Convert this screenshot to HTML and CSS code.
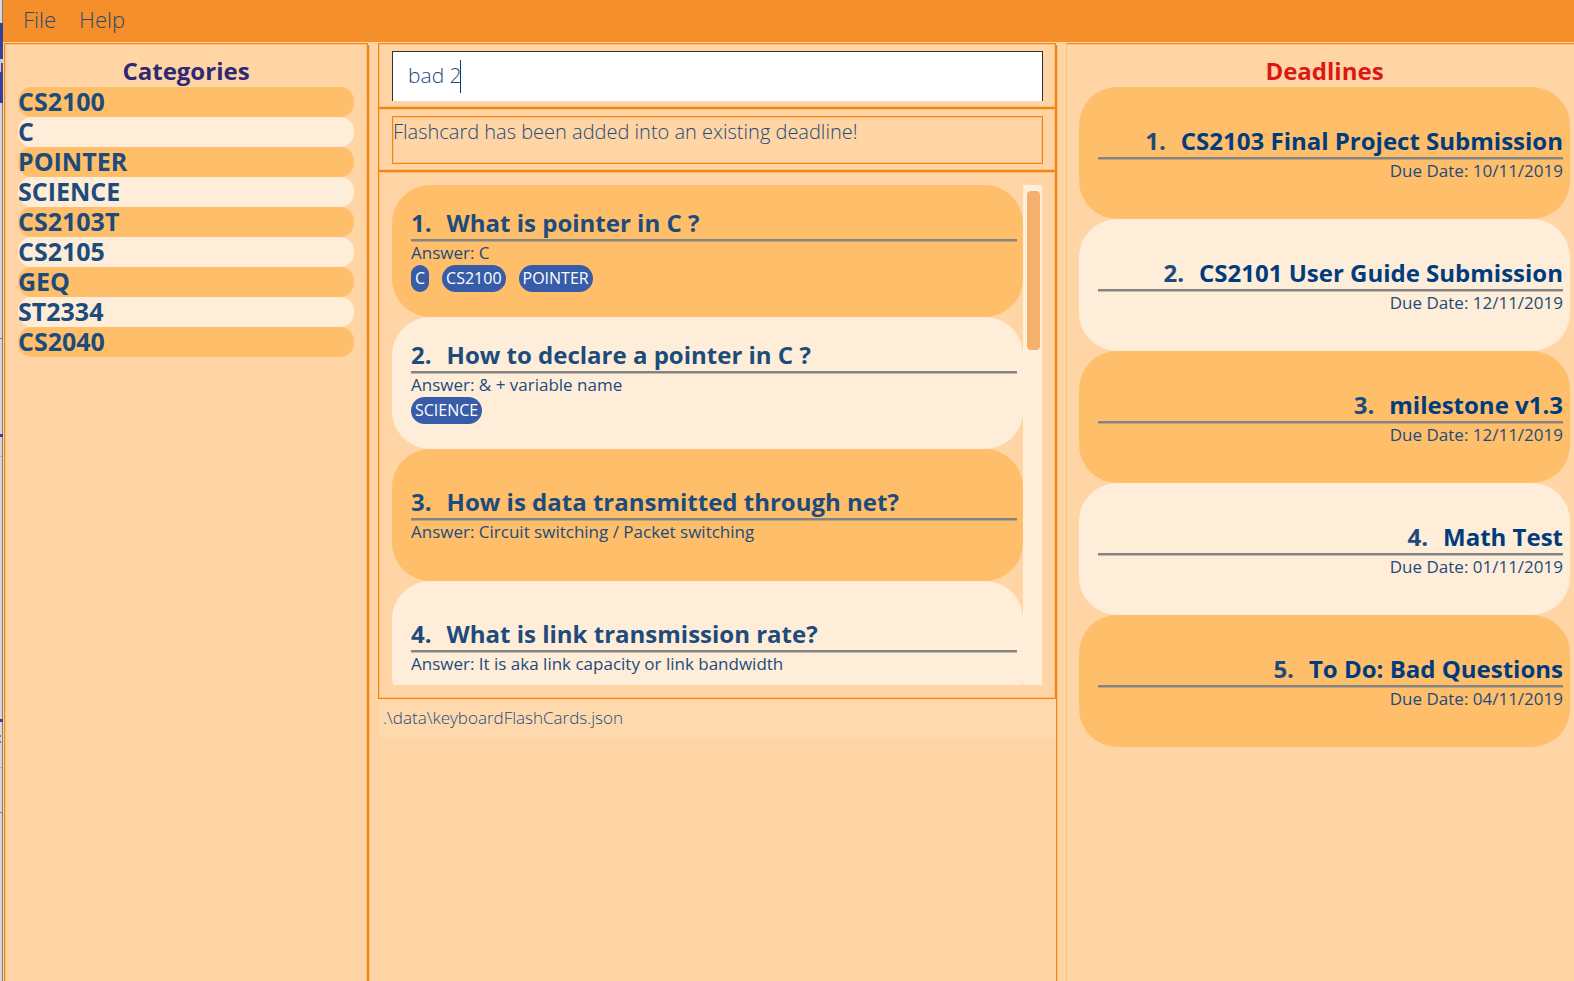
FILE: index.html
```html
<!DOCTYPE html>
<html lang="en">
<head>
<meta charset="utf-8">
<title>Keyboard Flash Cards</title>
<link rel="stylesheet" href="styles.css">
</head>
<body>
<div class="edge" aria-hidden="true">
  <svg class="edge-art" width="3" height="981" shape-rendering="crispEdges">
    <rect width="3" height="981" fill="#d8d8d8"/>
    <path d="M0 23h3v36H0zM0 72h3v31H0z" fill="#34409a"/>
    <path d="M0 59h3v13H0z" fill="#c9c8d6"/>
    <path d="M1 63h2v9H1z" fill="#5a4a86"/>
    <path d="M0 338h2v1H0zM0 735h1v2H0zM0 741h1v2H0zM0 812h2v1H0z" fill="#777"/>
    <path d="M0 456h2v1H0zM0 767h2v1H0z" fill="#b5b5b5"/>
    <path d="M2 103h1v878H2zM2 0h1v23H2z" fill="#7b7b80"/>
    <path d="M0 434h3v3H0zM0 719h3v3H0z" fill="#34409a"/>
  </svg>
</div>
<div class="window">
  <nav class="menubar">
    <button class="menu" type="button">File</button>
    <button class="menu" type="button">Help</button>
  </nav>
  <main class="columns">
    <section class="panel categories">
      <h2 class="heading">Categories</h2>
      <ul class="list category-list">
        <li class="category">CS2100</li>
        <li class="category">C</li>
        <li class="category">POINTER</li>
        <li class="category">SCIENCE</li>
        <li class="category">CS2103T</li>
        <li class="category">CS2105</li>
        <li class="category">GEQ</li>
        <li class="category">ST2334</li>
        <li class="category">CS2040</li>
      </ul>
    </section>
    <div class="divider"></div>
    <section class="center">
      <div class="pane command">
        <input class="command-input" type="text" aria-label="Command" value="bad 2">
        <span class="caret"></span>
      </div>
      <div class="pane result">
        <output class="result-box">Flashcard has been added into an existing deadline!</output>
      </div>
      <div class="pane cards">
        <ol class="list card-list">
          <li class="card">
            <h3 class="title"><span>1.</span><span>What is pointer in C ?</span></h3>
            <p class="detail">Answer: C</p>
            <div class="tags"><span class="tag">C</span><span class="tag">CS2100</span><span class="tag">POINTER</span></div>
          </li>
          <li class="card">
            <h3 class="title"><span>2.</span><span>How to declare a pointer in C ?</span></h3>
            <p class="detail">Answer: &amp; + variable name</p>
            <div class="tags"><span class="tag">SCIENCE</span></div>
          </li>
          <li class="card">
            <h3 class="title"><span>3.</span><span>How is data transmitted through net?</span></h3>
            <p class="detail">Answer: Circuit switching / Packet switching</p>
          </li>
          <li class="card">
            <h3 class="title"><span>4.</span><span>What is link transmission rate?</span></h3>
            <p class="detail">Answer: It is aka link capacity or link bandwidth</p>
          </li>
        </ol>
        <div class="track"><div class="thumb"></div></div>
      </div>
      <footer class="status">.\data\keyboardFlashCards.json</footer>
    </section>
    <div class="divider"></div>
    <section class="panel deadlines">
      <h2 class="heading">Deadlines</h2>
      <ol class="list deadline-list">
        <li class="card due">
          <h3 class="title"><span class="number">1.</span><span>CS2103 Final Project Submission</span></h3>
          <p class="detail">Due Date: 10/11/2019</p>
        </li>
        <li class="card due">
          <h3 class="title"><span class="number">2.</span><span>CS2101 User Guide Submission</span></h3>
          <p class="detail">Due Date: 12/11/2019</p>
        </li>
        <li class="card due">
          <h3 class="title"><span class="number">3.</span><span>milestone v1.3</span></h3>
          <p class="detail">Due Date: 12/11/2019</p>
        </li>
        <li class="card due">
          <h3 class="title"><span class="number">4.</span><span>Math Test</span></h3>
          <p class="detail">Due Date: 01/11/2019</p>
        </li>
        <li class="card due">
          <h3 class="title"><span class="number">5.</span><span>To Do: Bad Questions</span></h3>
          <p class="detail">Due Date: 04/11/2019</p>
        </li>
      </ol>
    </section>
  </main>
</div>
</body>
</html>
```
FILE: styles.css
```css
:root {
  --bg: #ffd5a5;
  --line: #f58316;
  --soft-line: #fbc07c;
  --odd: #ffbe6a;
  --even: #feedd8;
  --text: #1c4b7c;
}

* { box-sizing: border-box; }

body {
  margin: 0;
  display: flex;
  min-height: 100vh;
  background: var(--bg);
  color: var(--text);
  font-family: "Open Sans", "Noto Sans", sans-serif;
}

h2, h3, p { margin: 0; }

.edge {
  flex: none;
  width: 3px;
  background: #d8d8d8;
}

.edge-art { display: block; }

.window {
  flex: 1;
  min-width: 0;
  display: flex;
  flex-direction: column;
}

.menubar {
  display: flex;
  gap: 23px;
  height: 42px;
  padding: 0 20px 4px;
  background: #f58f2c;
}

.menu {
  padding: 0;
  border: 0;
  background: none;
  color: #2a4a68;
  font: 300 22px/38px "Open Sans", sans-serif;
}

.columns {
  flex: 1;
  display: grid;
  grid-template-columns: 364fr 10px 678fr 10px 508fr;
  padding: 1px 0 0 1px;
}

.panel {
  border: 1px solid var(--line);
  border-bottom: 0;
  box-shadow: inset 0 1px var(--soft-line);
}

.categories {
  padding: 13px 13px 0;
  box-shadow: inset 1px 1px var(--soft-line), inset -1px 0 var(--soft-line);
}

.deadlines {
  border-right: 0;
  border-left-color: var(--soft-line);
  padding: 13px 4px 0 12px;
}

.divider {
  margin-top: 2px;
  border-left: 1px solid var(--line);
  box-shadow: inset 1px 0 var(--soft-line);
}

.heading {
  padding-bottom: 2px;
  font-size: 24px;
  font-weight: 700;
  line-height: 28px;
  text-align: center;
  color: #2f2872;
}

.deadlines .heading { color: #dc1814; }

.list {
  margin: 0;
  padding: 0;
  list-style: none;
}

.category {
  height: 30px;
  border-radius: 14px;
  background: var(--odd);
  font-size: 25px;
  font-weight: 700;
  line-height: 28px;
}

.category:nth-child(even), .card:nth-child(even) { background: var(--even); }

.pane {
  border: 1px solid var(--line);
  box-shadow: inset 0 0 0 1px var(--soft-line);
  padding: 7px 12px 6px 13px;
}

.command {
  position: relative;
  height: 65px;
}

.command-input {
  display: block;
  width: 100%;
  height: 50px;
  padding: 0 16px 3px 15px;
  border: 1px solid #333;
  border-bottom: 0;
  border-radius: 0;
  background: #fff;
  color: #1c4b7c;
  font: 300 21px/46px "Open Sans", sans-serif;
  outline: 0;
}

.caret {
  position: absolute;
  left: 81px;
  top: 16px;
  width: 1px;
  height: 33px;
  background: #003c7d;
}

.result-box {
  display: block;
  height: 48px;
  border: 1px solid var(--line);
  box-shadow: inset 0 0 0 1px var(--soft-line);
  font-size: 20px;
  font-weight: 300;
  line-height: 30px;
}

.pane.cards {
  display: flex;
  padding: 13px;
}

.card-list {
  flex: 1;
  height: 500px;
  overflow: hidden;
}

.card {
  display: flex;
  flex-direction: column;
  justify-content: center;
  height: 132px;
  padding: 0 6px 0 19px;
  border-radius: 38px;
  background: var(--odd);
}

.title {
  display: flex;
  gap: 15px;
  border-bottom: 2px solid #848484;
  box-shadow: 0 1px #84848480;
  font-size: 24px;
  font-weight: 700;
  line-height: 32px;
}

.detail {
  font-size: 17px;
  line-height: 24px;
}

.tags {
  display: flex;
  align-items: flex-start;
  gap: 13px;
  height: 30px;
}

.tag {
  padding: 0 4px;
  border-radius: 14px;
  background: #375ca8;
  color: #fff;
  font-size: 16px;
  line-height: 27px;
}

.track {
  width: 19px;
  padding: 6px 2px 0 4px;
  background: #feefda;
}

.thumb {
  height: 159px;
  border-radius: 4px;
  background: #f5b06d;
}

.status {
  height: 39px;
  padding: 0 5px;
  background: #ffd9ae;
  font-size: 17px;
  font-weight: 300;
  line-height: 38px;
}

.due {
  padding: 2px 7px 0 19px;
  text-align: right;
}

.due .title {
  justify-content: flex-end;
  color: #003c7d;
}

.due .number { color: var(--text); }
```
